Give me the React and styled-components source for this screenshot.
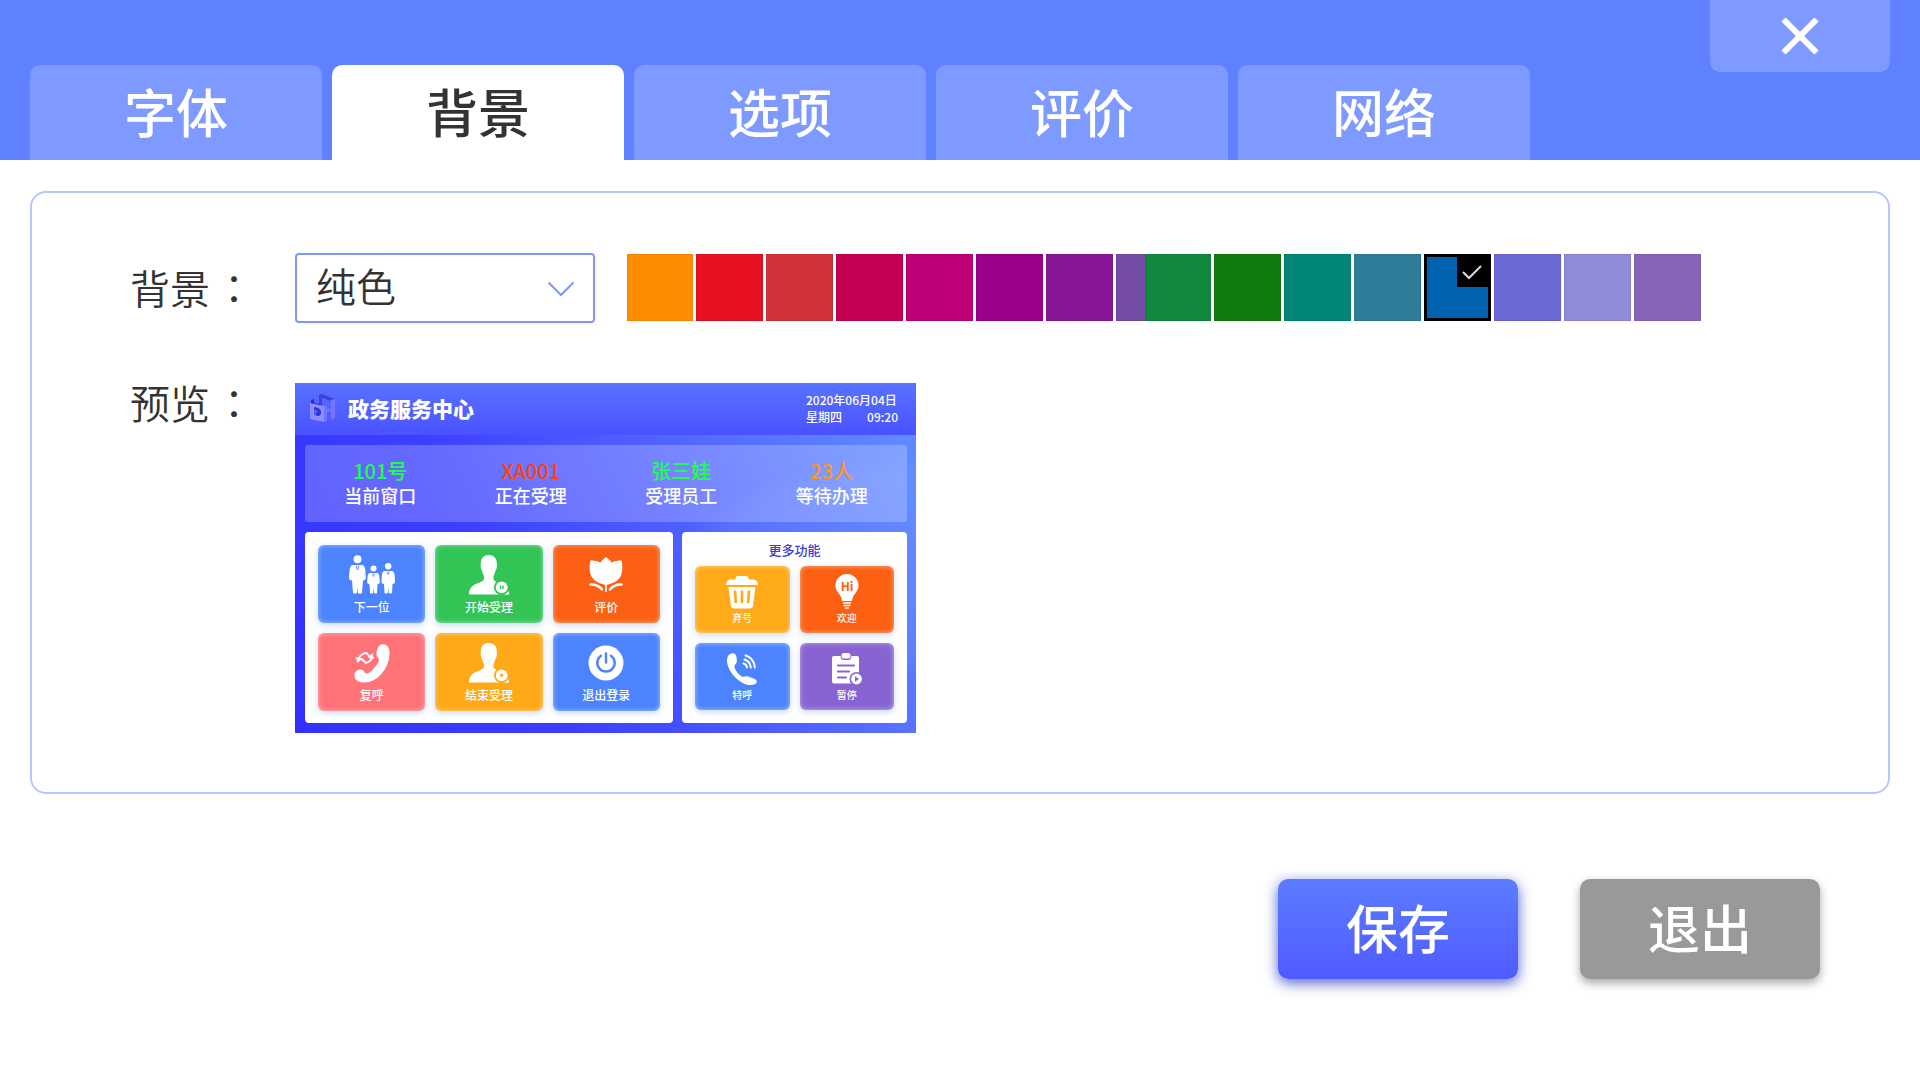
import React, { useState } from 'react'
import styled, { createGlobalStyle } from 'styled-components'

const GlobalStyle = createGlobalStyle`
*, *::before, *::after {
  box-sizing: border-box;
}
body {
  margin: 0;
  background: #fff;
  color: #333;
  font-family: 'Noto Sans CJK SC', 'Noto Sans', sans-serif;
}
button, select {
  font-family: inherit;
}
`

const Header = styled.header`
  display: flex;
  justify-content: space-between;
  align-items: flex-start;
  height: 160px;
  padding: 0 30px;
  background: #5f81ff;
`

const Tabs = styled.nav`
  display: flex;
  align-self: flex-end;
  gap: 10px;
`

const Tab = styled.button`
  width: 292px;
  height: 95px;
  padding: 0 0 4px;
  border: 0;
  border-radius: 10px 10px 0 0;
  background: ${p => (p.$active ? '#fff' : '#7f9aff')};
  color: ${p => (p.$active ? '#333' : '#fff')};
  font-size: 52px;
  font-weight: 500;
  line-height: 91px;
`

const Close = styled.button`
  display: flex;
  align-items: center;
  justify-content: center;
  width: 180px;
  height: 72px;
  padding: 0;
  border: 0;
  border-radius: 0 0 10px 10px;
  background: #7f9aff;
`

const Panel = styled.main`
  display: flex;
  flex-direction: column;
  gap: 60px;
  margin: 31px 30px 0;
  padding: 60px 98px 59px;
  border: 2px solid #b8c5ff;
  border-radius: 16px;
`

const Row = styled.div`
  display: flex;
  align-items: flex-start;
`

const Label = styled.label`
  flex: none;
  width: 165px;
  font-size: 40px;
  font-weight: 350;
  line-height: ${p => p.$line || 68}px;
`

const Colon = styled.span`
  margin-left: 4px;
  font-family: 'Noto Sans CJK TC', sans-serif;
`

const SelectBox = styled.div`
  position: relative;
  flex: none;
  width: 300px;
  margin-right: 32px;
`

const Select = styled.select`
  appearance: none;
  display: block;
  width: 100%;
  height: 70px;
  padding: 0 60px 6px 19px;
  border: 2px solid #7f96ff;
  border-radius: 4px;
  background: #fff;
  color: #333;
  font-size: 40px;
  font-weight: 350;
`

const Arrow = styled.svg`
  position: absolute;
  right: 20px;
  top: 28px;
  pointer-events: none;
`

const Strips = styled.div`
  display: flex;
  padding-top: 1px;
`

const Strip = styled.div`
  display: flex;
  gap: 3px;
  overflow: hidden;
  width: ${p => p.$width}px;
`

const Swatch = styled.label`
  display: flex;
  flex: none;
  justify-content: flex-end;
  width: 67px;
  height: 67px;
  background: ${p => p.$color};
  border: ${p => (p.$picked ? '3px solid #000' : '1px solid rgba(0, 0, 0, 0.06)')};

  &:first-child {
    width: 66px;
  }

  input {
    appearance: none;
    width: 0;
    height: 0;
    margin: 0;
  }
`

const Preview = styled.section`
  flex: none;
  width: 621px;
  height: 350px;
  background:
    radial-gradient(ellipse 330px 150px at 100% 52%, rgba(150, 185, 255, 0.1) 60%, transparent 72%),
    linear-gradient(62deg, #3330ff 0%, #3b40ff 35%, #5060ff 62%, #5f8aff 95%);
`

const PreviewHead = styled.div`
  display: flex;
  align-items: center;
  height: 52px;
  padding: 0 18px 2px 15px;
  background: linear-gradient(#5873ff, #4a52ff);
  color: #fff;
`

const PreviewTitle = styled.h2`
  flex: 1;
  margin: 0 0 0 12px;
  font-size: 21px;
  font-weight: 900;
  line-height: 24px;
`

const Clock = styled.div`
  display: flex;
  flex-wrap: wrap;
  justify-content: space-between;
  width: 92px;
  font-size: 12px;
  font-weight: 500;
  line-height: 17px;
  white-space: nowrap;
`

const PreviewBody = styled.div`
  display: grid;
  grid-template-columns: 368fr 225fr;
  gap: 10px 9px;
  padding: 10px 9px 10px 10px;
`

const Stats = styled.div`
  display: grid;
  grid-column: 1 / -1;
  grid-template-columns: repeat(4, 1fr);
  align-items: center;
  height: 77px;
  padding-bottom: 2px;
  border-radius: 3px;
  background: rgba(255, 255, 255, 0.22);
`

const Stat = styled.div`
  color: #fff;
  font-size: 18px;
  font-weight: 500;
  line-height: 24px;
  text-align: center;
`

const StatValue = styled.div`
  color: ${p => p.$color};
  font-size: 20px;
`

const Card = styled.div`
  display: grid;
  grid-template-columns: repeat(${p => p.$cols}, 1fr);
  align-content: start;
  gap: 10px;
  height: 191px;
  padding: ${p => (p.$cols === 3 ? 13 : 10)}px 13px;
  border-radius: 4px;
  background: #fff;
`

const CardTitle = styled.h3`
  grid-column: 1 / -1;
  margin: 0 0 -2px;
  color: #3c3ad6;
  font-size: 13px;
  font-weight: 500;
  line-height: 16px;
  text-align: center;
`

const Tile = styled.button`
  display: flex;
  flex-direction: column;
  align-items: center;
  height: ${p => (p.$small ? 67 : 78)}px;
  padding: ${p => (p.$small ? 8 : 10)}px 0 0;
  border: 0;
  border-radius: 6px;
  background: ${p => p.$color};
  color: ${p => p.$color};
  box-shadow: inset 0 0 5px rgba(255, 255, 255, 0.5), 0 2px 6px rgba(70, 130, 210, 0.3);
`

const IconBox = styled.span`
  display: flex;
  align-items: center;
  justify-content: center;
  height: ${p => (p.$small ? 36 : 40)}px;
  margin-bottom: ${p => (p.$small ? 0 : 4)}px;
`

const TileText = styled.span`
  color: #fff;
  font-size: ${p => (p.$small ? 10 : 12)}px;
  font-weight: 500;
  line-height: 16px;
`

const Footer = styled.footer`
  display: flex;
  justify-content: flex-end;
  gap: 62px;
  padding: 85px 100px 60px;
`

const Action = styled.button`
  width: 240px;
  height: 100px;
  padding: 0 0 4px;
  border: 0;
  border-radius: 10px;
  background: ${p => (p.$primary ? 'linear-gradient(#5c7dff, #4f5aff)' : '#999')};
  box-shadow: ${p => (p.$primary ? '0 4px 14px rgba(40, 60, 190, 0.8)' : '0 4px 10px rgba(0, 0, 0, 0.35)')};
  color: #fff;
  font-size: 52px;
  font-weight: 500;
  line-height: 96px;
`

const Logo = () => (
  <svg width="26" height="29" viewBox="0 0 26 29">
    <path d="M1 6l3-1v4l5 1V1l3-1v11l-3 1-8-2z" fill="#2a2ac8" />
    <path d="M9 1l3-1 13 5-1 3-12-4v7l-3-1z" fill="#4143dc" />
    <path d="M21 6l4-1v19l-4 2v-9l-4 1v9l-3 1V12l3-1v4l4-1z" fill="#7274fa" />
    <path fillRule="evenodd" d="M0 9l14 3v16L0 25zM4 13v8l4 1c4 0 4-7 0-8z" fill="#8c8efc" />
    <path d="M4 13l4 1c4 1 4 8 0 8l-2-.5v-2.500c2 0 2-2 1-2.500l-3-1z" fill="#2f34dc" />
  </svg>
)

const People = () => (
  <svg width="48" height="40" viewBox="0 0 48 40" fill="#fff">
    <circle cx="9.500" cy="4.200" r="4" />
    <path d="M5 10h9c2 0 3 2 3.300 5l.5 8c0 1.500-1 2.500-2.800 2.500L14 38q-2 1.500-4 0l-.5-6-.5 6q-2 1.500-4 0L4 25.500C2 25.500 1 24.500 1 23l.6-8C2 12 3 10 5 10z" />
    <circle cx="25.500" cy="13.500" r="3" />
    <path d="M22 18h7c1.500 0 2.300 2 2.500 4l.3 5c0 1.500-1 2.200-2.300 2.200L29 38q-1.500 1-3 0l-.5-5-.5 5q-1.500 1-3 0l-.5-8.800c-1.500 0-2.300-.7-2.300-2.200l.3-5c.2-2 1-4 2.500-4z" />
    <circle cx="40.200" cy="11.300" r="3.200" />
    <path d="M36.500 16h7.500c1.500 0 2.500 2 2.700 4.500l.3 6c0 1.700-1 2.500-2.500 2.500L44 38q-1.500 1-3.300 0l-.5-5-.5 5q-1.500 1-3.200 0l-.5-9c-1.500 0-2.500-.8-2.500-2.500l.3-6c.2-2.500 1.200-4.500 2.700-4.500z" />
    <path d="M8.300 10.500L9 15M10.700 10.500L10 15M24.700 18.500l.5 3M26.300 18.500l-.5 3M39.500 16.500l.4 3M41 16.500l-.4 3" stroke="currentColor" strokeWidth=".8" />
  </svg>
)

const User = ({ pause }) => (
  <svg width="40" height="40" viewBox="0 0 40 40">
    <path d="M19.800 0c5 0 8 3.500 8 8 0 2 .3 2.500 0 4.500-.3 2-1.200 2.500-1.700 4.500-.6 2.500-1.700 3.500-1.700 6 0 3 3 4 7 5.500 5 2 7.600 5 8.100 11H0c0-6 3-9 8-11 4-1.600 7-2.500 7-5.500 0-2.500-1-3.500-1.600-6-.5-2-1.300-2.500-1.600-4.500-.3-2 0-2.500 0-4.500 0-4.500 3-8 8-8z" fill="#fff" />
    <circle cx="32.700" cy="32.300" r="7.800" fill="currentColor" />
    <path d="M40 36v3.500h-4.500q3-1 4.500-3.500z" fill="#fff" />
    <circle cx="32.700" cy="32.300" r="5.900" fill="#fff" />
    {pause
      ? <path d="M31.500 30.500v3.600M34 30.500v3.600" stroke="currentColor" strokeWidth="1.400" />
      : <rect x="31.200" y="30.800" width="3" height="3" rx="1" fill="currentColor" />}
  </svg>
)

const Tulip = () => (
  <svg width="34" height="36" viewBox="0 0 34 36" fill="#fff">
    <path d="M17 0c2 1.500 4 3 5.500 5.500 3-1.500 6-2 10-2 1 4 1.500 10-.5 15C29.500 24 23 27 17 28 11 27 4.500 24 2 18.500 0 13.500.5 7.500 1.500 3.500c4 0 7 .5 10 2C13 3 15 1.500 17 0z" />
    <path d="M17 27v8" stroke="#fff" strokeWidth="1.600" />
    <path d="M1.500 27.500q7-.5 11.500 5M32.500 27.500q-7-.5-11.500 5" fill="none" stroke="#fff" strokeWidth="2.600" strokeLinecap="round" />
  </svg>
)

const Recall = () => (
  <svg width="36" height="39" viewBox="0 0 36 39" fill="#fff">
    <path d="M27 .5c5-1.500 9 2 8.500 10C35 19 31 27 25 32.500 19 38 12 39.500 6 38 2 37 0 34 .5 30c.5-3 4-5 7-4.500 2.500.5 2.500 3.500 5 4 3 .5 11-8 12.500-13 .7-2.500-2.500-3-2.500-6 0-4 1.500-9 4.500-10z" />
    <path d="M4.500 14.500Q8 9 12.500 9l3.500 4M7.500 15l4.500 4q5-1.500 6-6" fill="none" stroke="#fff" strokeWidth="1.800" />
    <path d="M1.500 13l7 1.500-5 4.500zM20 15l-6.500-1.500 5-4.500z" />
  </svg>
)

const Power = () => (
  <svg width="36" height="36" viewBox="0 0 36 36">
    <circle cx="18" cy="18" r="17.500" fill="#fff" />
    <path d="M18 8.500v9M13 10.700a8.700 8.700 0 1 0 10 0" fill="none" stroke="currentColor" strokeWidth="2.400" strokeLinecap="round" />
  </svg>
)

const Trash = () => (
  <svg width="32" height="33" viewBox="0 0 32 33">
    <path d="M9.500 3.500V2q0-2 2-2h9q2 0 2 2v1.500H28q4 1 4 5.500H0q0-4.500 4-5.500z" fill="#fff" />
    <path d="M2.500 11h27L27 30q-.5 2.500-3 2.500H8Q5.500 32.500 5 30z" fill="#fff" />
    <path d="M9 14.500l.8 12.500M16 14.500V27M23 14.500L22.200 27" stroke="currentColor" strokeWidth="2.600" />
  </svg>
)

const Bulb = () => (
  <svg width="24" height="36" viewBox="0 0 24 36">
    <path d="M12 0a11.500 11.500 0 0 1 11.500 11.500c0 5-3 7-5 10.500-1 2-1.200 3-1.500 5H7c-.3-2-.5-3-1.500-5-2-3.500-5-5.500-5-10.500A11.500 11.500 0 0 1 12 0z" fill="#fff" />
    <path d="M8.500 29h7M9 31.500h6M10.500 34h3" stroke="#fff" strokeWidth="1.400" strokeLinecap="round" />
    <text x="12" y="16.500" textAnchor="middle" fontSize="12" fontWeight="700" fill="currentColor">Hi</text>
  </svg>
)

const Phone = () => (
  <svg width="30" height="32" viewBox="0 0 30 32">
    <path d="M3 1c2.500-1.500 5-1 6 1.500.8 2 1 4.500.7 6.500-.3 2.500-2.700 2.500-2.200 5 .7 3.500 4 7.500 7 9.300 2.500 1.500 3.500-.8 6 0 2.500.7 6 2 8 3.200 2 1.500 1.500 3.500-.5 4.500-5 2.500-12 .5-18-5C3.500 20.500 0 13 0 7.500 0 4.500 1 2.200 3 1z" fill="#fff" />
    <path d="M16.500 10.500q3 .7 3.500 4M17.500 6.500q5.500 1.500 6.300 8M18.500 2.500q8.500 2.500 9.300 12" fill="none" stroke="#fff" strokeWidth="2" strokeLinecap="round" />
  </svg>
)

const Clipboard = () => (
  <svg width="30" height="32" viewBox="0 0 30 32">
    <path d="M2 3h6.500q.5 4 3 4h5q2.500 0 3-4H25q2 0 2 2v25.500H2q-2 0-2-2V5q0-2 2-2z" fill="#fff" />
    <rect x="9.500" y="0" width="9" height="5.500" rx="2.500" fill="#fff" />
    <path d="M6 12.500h16M6 18.500h11M6 24.500h8" stroke="currentColor" strokeWidth="2.200" strokeLinecap="round" />
    <circle cx="24.500" cy="26" r="7" fill="currentColor" />
    <circle cx="24.500" cy="26" r="5.400" fill="#fff" />
    <path d="M23 23.300l4 2.700-4 2.700z" fill="currentColor" />
  </svg>
)

const tabs = ['字体', '背景', '选项', '评价', '网络']

const warm = ['#ff8c00', '#e81123', '#d13438', '#c30052', '#bf0077', '#9a0089', '#881798', '#744da9']
const cool = ['#10893e', '#107c10', '#018574', '#2d7d9a', '#0063b1', '#6b69d6', '#8e8cd8', '#8764b8']

const stats = [
  { value: '101号', label: '当前窗口', color: '#1fff4b' },
  { value: 'XA001', label: '正在受理', color: '#ff4209' },
  { value: '张三娃', label: '受理员工', color: '#1fff4b' },
  { value: '23人', label: '等待办理', color: '#ff9519' },
]

const mainTiles = [
  { text: '下一位', color: '#4c84ff', icon: <People /> },
  { text: '开始受理', color: '#32c455', icon: <User pause /> },
  { text: '评价', color: '#fb6014', icon: <Tulip /> },
  { text: '复呼', color: '#ff7378', icon: <Recall /> },
  { text: '结束受理', color: '#ffa918', icon: <User /> },
  { text: '退出登录', color: '#4c84ff', icon: <Power /> },
]

const moreTiles = [
  { text: '弃号', color: '#ffaa18', icon: <Trash /> },
  { text: '欢迎', color: '#fc6012', icon: <Bulb /> },
  { text: '特呼', color: '#4c84ff', icon: <Phone /> },
  { text: '暂停', color: '#8864d2', icon: <Clipboard /> },
]

const renderTile = (tile, small) => (
  <Tile type="button" key={tile.text} $color={tile.color} $small={small}>
    <IconBox $small={small}>{tile.icon}</IconBox>
    <TileText $small={small}>{tile.text}</TileText>
  </Tile>
)

const App = () => {
  const [tab, setTab] = useState('背景')
  const [color, setColor] = useState('#0063b1')

  const renderSwatch = c => (
    <Swatch key={c} $color={c} $picked={c === color}>
      <input type="radio" name="color" aria-label={c} checked={c === color} onChange={() => setColor(c)} />
      {c === color && (
        <svg width="31" height="30" viewBox="0 0 31 30">
          <path d="M0 0h31v30H0z" />
          <path d="M6 15l6 6L24 9" fill="none" stroke="#ddd" strokeWidth="2" />
        </svg>
      )}
    </Swatch>
  )

  return (
    <>
      <GlobalStyle />
      <Header>
        <Tabs>
          {tabs.map(t => (
            <Tab type="button" key={t} $active={t === tab} onClick={() => setTab(t)}>{t}</Tab>
          ))}
        </Tabs>
        <Close type="button" aria-label="关闭">
          <svg width="38" height="38" viewBox="0 0 38 38">
            <path d="M2.500 2.500l33 33M35.500 2.500l-33 33" stroke="#fff" strokeWidth="6" />
          </svg>
        </Close>
      </Header>

      <Panel>
        <Row>
          <Label htmlFor="bg">背景<Colon>：</Colon></Label>
          <SelectBox>
            <Select id="bg" defaultValue="纯色">
              <option>纯色</option>
              <option>图片</option>
            </Select>
            <Arrow width="28" height="16" viewBox="0 0 28 16">
              <path d="M1.500 1.500L14 14 26.500 1.500" fill="none" stroke="#7f96ff" strokeWidth="2" />
            </Arrow>
          </SelectBox>
          <Strips>
            <Strip $width={518}>{warm.map(renderSwatch)}</Strip>
            <Strip $width={556}>{cool.map(renderSwatch)}</Strip>
          </Strips>
        </Row>

        <Row>
          <Label as="div" $line={38}>预览<Colon>：</Colon></Label>
          <Preview>
            <PreviewHead>
              <Logo />
              <PreviewTitle>政务服务中心</PreviewTitle>
              <Clock>
                <span>2020年06月04日</span>
                <span>星期四</span>
                <span>09:20</span>
              </Clock>
            </PreviewHead>
            <PreviewBody>
              <Stats>
                {stats.map(s => (
                  <Stat key={s.label}>
                    <StatValue $color={s.color}>{s.value}</StatValue>
                    {s.label}
                  </Stat>
                ))}
              </Stats>
              <Card $cols={3}>
                {mainTiles.map(t => renderTile(t, false))}
              </Card>
              <Card $cols={2}>
                <CardTitle>更多功能</CardTitle>
                {moreTiles.map(t => renderTile(t, true))}
              </Card>
            </PreviewBody>
          </Preview>
        </Row>
      </Panel>

      <Footer>
        <Action type="button" $primary>保存</Action>
        <Action type="button">退出</Action>
      </Footer>
    </>
  )
}

export default App
